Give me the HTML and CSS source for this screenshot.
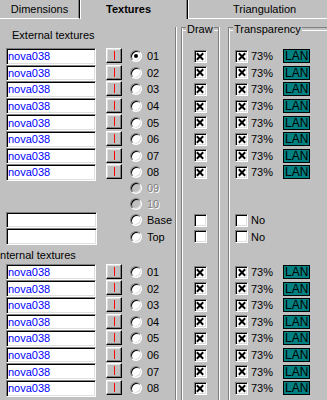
FILE: index.html
```html
<!DOCTYPE html>
<html lang="en">
  <head>
    <meta charset="UTF-8" />
    <title>Textures</title>
    <link rel="stylesheet" href="styles.css">
  </head>
  <body>
    <div class="tabs">
      <div class="tab tab-dim">Dimensions</div>
      <div class="tab tab-active">Textures</div>
      <div class="tab tab-tri">Triangulation</div>
    </div>

    <div class="page">
      <!-- texture names -->
      <div class="col-tex">
        <div class="head">External textures</div>
        <div class="row row-l"><input class="field" value="nova038"><button class="btn"><i class="bar"></i></button><span class="radio on"></span><span class="opt">01</span></div>
        <div class="row row-l"><input class="field" value="nova038"><button class="btn"><i class="bar"></i></button><span class="radio"></span><span class="opt">02</span></div>
        <div class="row row-l"><input class="field" value="nova038"><button class="btn"><i class="bar"></i></button><span class="radio"></span><span class="opt">03</span></div>
        <div class="row row-l"><input class="field" value="nova038"><button class="btn"><i class="bar"></i></button><span class="radio"></span><span class="opt">04</span></div>
        <div class="row row-l"><input class="field" value="nova038"><button class="btn"><i class="bar"></i></button><span class="radio"></span><span class="opt">05</span></div>
        <div class="row row-l"><input class="field" value="nova038"><button class="btn"><i class="bar"></i></button><span class="radio"></span><span class="opt">06</span></div>
        <div class="row row-l"><input class="field" value="nova038"><button class="btn"><i class="bar"></i></button><span class="radio"></span><span class="opt">07</span></div>
        <div class="row row-l"><input class="field" value="nova038"><button class="btn"><i class="bar"></i></button><span class="radio"></span><span class="opt">08</span></div>
        <div class="row row-l row-09"><span class="radio off"></span><span class="opt dim">09</span></div>
        <div class="row row-l row-10"><span class="radio off"></span><span class="opt dim">10</span></div>
        <div class="row row-l row-end"><input class="field wide" value=""><span class="radio"></span><span class="opt">Base</span></div>
        <div class="row row-l row-end"><input class="field wide" value=""><span class="radio"></span><span class="opt">Top</span></div>
        <div class="label-row">Internal textures</div>
        <div class="row row-l"><input class="field" value="nova038"><button class="btn"><i class="bar"></i></button><span class="radio"></span><span class="opt">01</span></div>
        <div class="row row-l"><input class="field" value="nova038"><button class="btn"><i class="bar"></i></button><span class="radio"></span><span class="opt">02</span></div>
        <div class="row row-l"><input class="field" value="nova038"><button class="btn"><i class="bar"></i></button><span class="radio"></span><span class="opt">03</span></div>
        <div class="row row-l"><input class="field" value="nova038"><button class="btn"><i class="bar"></i></button><span class="radio"></span><span class="opt">04</span></div>
        <div class="row row-l"><input class="field" value="nova038"><button class="btn"><i class="bar"></i></button><span class="radio"></span><span class="opt">05</span></div>
        <div class="row row-l"><input class="field" value="nova038"><button class="btn"><i class="bar"></i></button><span class="radio"></span><span class="opt">06</span></div>
        <div class="row row-l"><input class="field" value="nova038"><button class="btn"><i class="bar"></i></button><span class="radio"></span><span class="opt">07</span></div>
        <div class="row row-l"><input class="field" value="nova038"><button class="btn"><i class="bar"></i></button><span class="radio"></span><span class="opt">08</span></div>
      </div>

      <!-- draw flags -->
      <div class="group group-draw">
        <div class="group-head"><span>Draw</span></div>
        <div class="row row-c"><span class="check on"></span></div>
        <div class="row row-c"><span class="check on"></span></div>
        <div class="row row-c"><span class="check on"></span></div>
        <div class="row row-c"><span class="check on"></span></div>
        <div class="row row-c"><span class="check on"></span></div>
        <div class="row row-c"><span class="check on"></span></div>
        <div class="row row-c"><span class="check on"></span></div>
        <div class="row row-c"><span class="check on"></span></div>
        <div class="row row-09"></div>
        <div class="row row-10"></div>
        <div class="row row-c row-end"><span class="check"></span></div>
        <div class="row row-c row-end"><span class="check"></span></div>
        <div class="label-gap"></div>
        <div class="row row-c"><span class="check on"></span></div>
        <div class="row row-c"><span class="check on"></span></div>
        <div class="row row-c"><span class="check on"></span></div>
        <div class="row row-c"><span class="check on"></span></div>
        <div class="row row-c"><span class="check on"></span></div>
        <div class="row row-c"><span class="check on"></span></div>
        <div class="row row-c"><span class="check on"></span></div>
        <div class="row row-c"><span class="check on"></span></div>
      </div>

      <!-- transparency -->
      <div class="group group-trans">
        <div class="group-head"><span>Transparency</span></div>
        <div class="row row-t"><span class="check on"></span><span class="pct">73%</span><span class="lan">LAN</span></div>
        <div class="row row-t"><span class="check on"></span><span class="pct">73%</span><span class="lan">LAN</span></div>
        <div class="row row-t"><span class="check on"></span><span class="pct">73%</span><span class="lan">LAN</span></div>
        <div class="row row-t"><span class="check on"></span><span class="pct">73%</span><span class="lan">LAN</span></div>
        <div class="row row-t"><span class="check on"></span><span class="pct">73%</span><span class="lan">LAN</span></div>
        <div class="row row-t"><span class="check on"></span><span class="pct">73%</span><span class="lan">LAN</span></div>
        <div class="row row-t"><span class="check on"></span><span class="pct">73%</span><span class="lan">LAN</span></div>
        <div class="row row-t"><span class="check on"></span><span class="pct">73%</span><span class="lan">LAN</span></div>
        <div class="row row-09"></div>
        <div class="row row-10"></div>
        <div class="row row-t row-end"><span class="check"></span><span class="pct">No</span></div>
        <div class="row row-t row-end"><span class="check"></span><span class="pct">No</span></div>
        <div class="label-gap"></div>
        <div class="row row-t"><span class="check on"></span><span class="pct">73%</span><span class="lan">LAN</span></div>
        <div class="row row-t"><span class="check on"></span><span class="pct">73%</span><span class="lan">LAN</span></div>
        <div class="row row-t"><span class="check on"></span><span class="pct">73%</span><span class="lan">LAN</span></div>
        <div class="row row-t"><span class="check on"></span><span class="pct">73%</span><span class="lan">LAN</span></div>
        <div class="row row-t"><span class="check on"></span><span class="pct">73%</span><span class="lan">LAN</span></div>
        <div class="row row-t"><span class="check on"></span><span class="pct">73%</span><span class="lan">LAN</span></div>
        <div class="row row-t"><span class="check on"></span><span class="pct">73%</span><span class="lan">LAN</span></div>
        <div class="row row-t"><span class="check on"></span><span class="pct">73%</span><span class="lan">LAN</span></div>
      </div>
    </div>
  </body>
</html>
```

FILE: styles.css
```css
* {
  margin: 0;
  padding: 0;
  box-sizing: border-box;
}

html,
body {
  background: #c0c0c0;
}

body {
  width: 327px;
  height: 400px;
  overflow: hidden;
  font-family: "Liberation Sans", Arial, sans-serif;
  font-size: 11px;
  color: #000;
}

/* tab strip */
.tabs {
  display: flex;
  align-items: flex-end;
  height: 19px;
}

.tab {
  flex-shrink: 0;
  height: 22px;
  padding-top: 5px;
  line-height: 13px;
  background: #c0c0c0;
  border-top: 1px solid #fff;
  border-left: 1px solid #fff;
  border-right: 1px solid #000;
  border-bottom: 1px solid #fff;
  border-radius: 3px 3px 0 0;
  box-shadow: inset -1px 0 #808080;
  white-space: nowrap;
}

.tab-dim {
  width: 80px;
  text-align: center;
  border-left: none;
}

.tab-active {
  width: 108px;
  padding-left: 25px;
  font-weight: bold;
  border-bottom: none;
}

.tab-tri {
  width: 160px;
  padding-left: 44px;
}

/* panel */
.page {
  display: flex;
  height: 381px;
  padding-top: 8px;
}

.col-tex {
  flex-shrink: 0;
  width: 176px;
  border-right: 1px solid #808080;
  box-shadow: 1px 0 #fff;
}

.head {
  height: 21px;
  padding-left: 12px;
  line-height: 16px;
}

.group {
  flex-shrink: 0;
  border-left: 1px solid #808080;
  border-right: 1px solid #808080;
  box-shadow: inset 1px 0 #fff, 1px 0 #fff;
}

.group-draw {
  width: 38px;
  margin-left: 5px;
}

.group-trans {
  width: 130px;
  margin-left: 9px;
}

.group-head {
  display: flex;
  align-items: flex-start;
  height: 21px;
}

.group-head::before,
.group-head::after {
  content: "";
  height: 2px;
  border-top: 1px solid #808080;
  border-bottom: 1px solid #fff;
}

.group-head::before {
  width: 4px;
}

.group-head::after {
  flex: 1;
}

.group-head span {
  margin-top: -4px;
  padding: 0 1px;
  line-height: 13px;
}

/* rows */
.row {
  height: 16.6px;
}

.row-09 {
  height: 15px;
}

.row-10 {
  height: 16px;
}

.row-end {
  height: 16.5px;
}

.label-row {
  height: 19px;
  padding-top: 4.5px;
  line-height: 13px;
  margin-left: -3px;
}

.label-gap {
  height: 19px;
}

.row-l {
  display: grid;
  grid-template-columns: 100px 24px 17px auto;
  align-items: center;
  padding-left: 6px;
}

.row-c {
  display: flex;
  justify-content: center;
  align-items: center;
}

.row-t {
  display: flex;
  align-items: center;
  padding-left: 6px;
}

/* controls */
.field {
  grid-column: 1;
  width: 90px;
  height: 100%;
  padding: 0 0 0 1px;
  font: inherit;
  color: #00f;
  background: #fff;
  border: 1px solid;
  border-color: #808080 #fff #fff #808080;
  box-shadow: inset 1px 1px #000, inset -1px -1px #dfdfdf;
  outline: none;
}

.field.wide {
  width: 91px;
}

.btn {
  grid-column: 2;
  align-self: start;
  width: 16px;
  height: 15px;
  display: flex;
  justify-content: center;
  align-items: center;
  background: #c0c0c0;
  border: 1px solid;
  border-color: #fff #000 #000 #fff;
  box-shadow: inset -1px -1px #808080, inset 1px 1px #dfdfdf;
}

.bar {
  width: 1px;
  height: 9px;
  background: #f00;
}

.radio {
  grid-column: 3;
  width: 12px;
  height: 12px;
  display: grid;
  place-items: center;
  border-radius: 50%;
  background: #fff;
  border: 1px solid;
  border-color: #808080 #fff #fff #808080;
  box-shadow: inset 1px 1px #000, inset -1px -1px #dfdfdf;
}

.radio.on::after {
  content: "";
  width: 4px;
  height: 4px;
  border-radius: 50%;
  background: #000;
}

.radio.off {
  background: #c0c0c0;
}

.opt {
  grid-column: 4;
}

.opt.dim {
  color: #808080;
  text-shadow: 1px 1px #fff;
}

.check {
  width: 13px;
  height: 13px;
  display: grid;
  place-items: center;
  background: #fff;
  border: 1px solid;
  border-color: #808080 #fff #fff #808080;
  box-shadow: inset 1px 1px #000, inset -1px -1px #dfdfdf;
}

.check.on::before,
.check.on::after {
  content: "";
  grid-area: 1 / 1;
  width: 2px;
  height: 9px;
  background: #000;
  transform: rotate(45deg);
}

.check.on::after {
  transform: rotate(-45deg);
}

.pct {
  width: 35px;
  padding-left: 3px;
}

.lan {
  width: 27px;
  height: 14px;
  padding-left: 1px;
  font-size: 12px;
  line-height: 12px;
  background: #008080;
  border: 1px solid #000;
}
```
